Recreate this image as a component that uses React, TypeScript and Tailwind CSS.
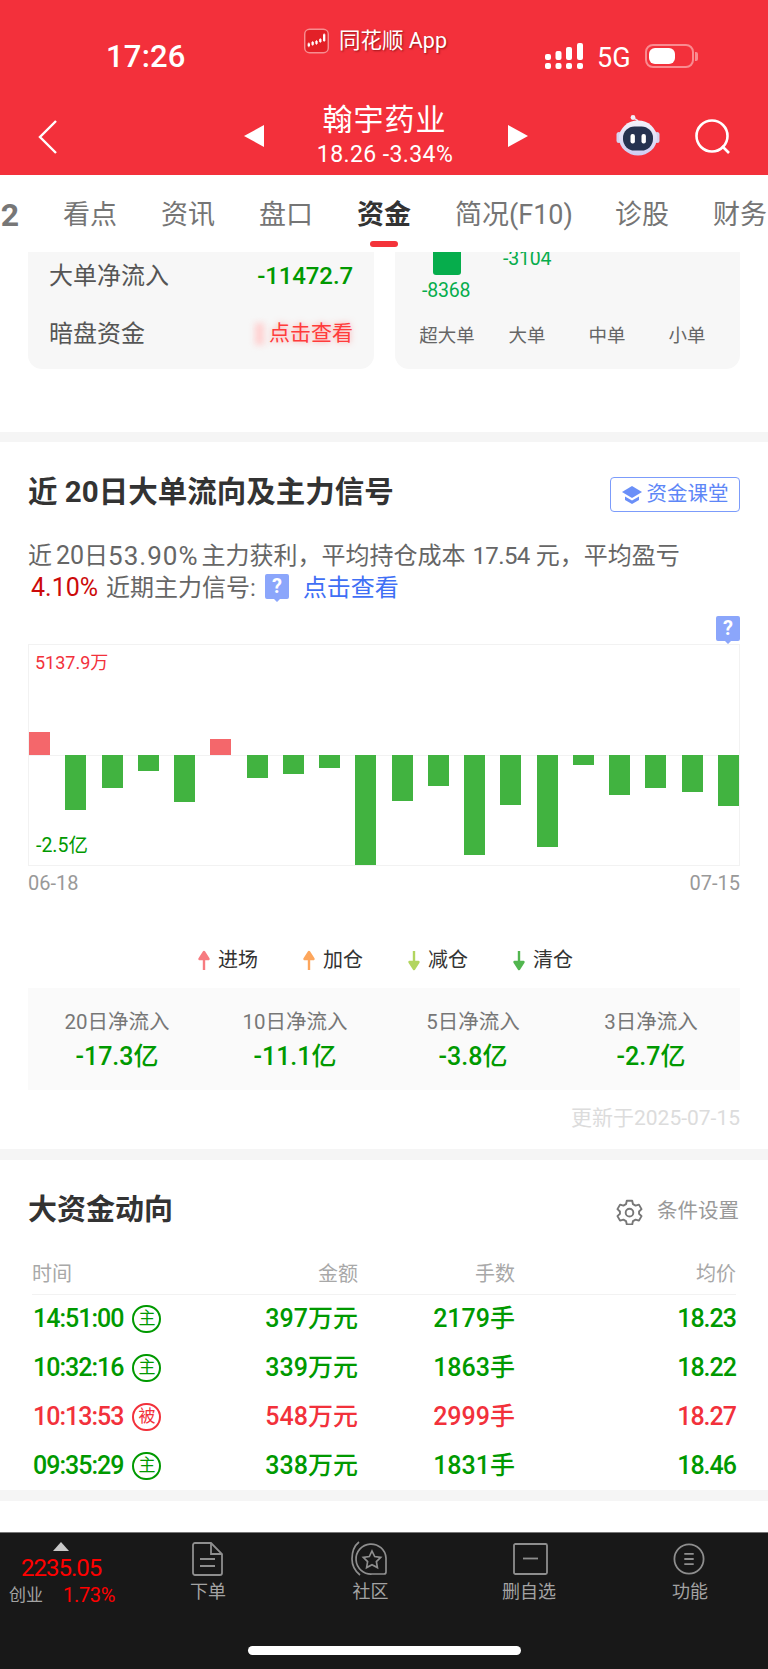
import React from 'react';

const bars = [23, -55, -33, -16, -47, 16, -23, -19, -13, -111, -46, -31, -100, -50, -92, -10, -40, -33, -37, -51];

const tabs = ['看点', '资讯', '盘口', '资金', '简况(F10)', '诊股', '财务'];

const stats = [
    { label: '20日净流入', value: '-17.3亿' },
    { label: '10日净流入', value: '-11.1亿' },
    { label: '5日净流入', value: '-3.8亿' },
    { label: '3日净流入', value: '-2.7亿' },
];

const rows = [
    { time: '14:51:00', tag: '主', amount: '397万元', hands: '2179手', price: '18.23', up: false },
    { time: '10:32:16', tag: '主', amount: '339万元', hands: '1863手', price: '18.22', up: false },
    { time: '10:13:53', tag: '被', amount: '548万元', hands: '2999手', price: '18.27', up: true },
    { time: '09:35:29', tag: '主', amount: '338万元', hands: '1831手', price: '18.46', up: false },
];

const legend = [
    { text: '进场', color: '#f77b80', up: true },
    { text: '加仓', color: '#fda65c', up: true },
    { text: '减仓', color: '#b2d55f', up: false },
    { text: '清仓', color: '#52b64f', up: false },
];

const AppLogo = () => (
    <svg width="26" height="26" viewBox="0 0 26 26" className="mt-[1px]">
        <rect x="0.75" y="0.75" width="24.5" height="24.5" rx="5" fill="#e32027" stroke="#f78d90" strokeWidth="1.5" />
        <path d="M5 14.500v5M9 13v5M13 12v5M17 10v5M21 5v9" stroke="#fff" strokeWidth="0.8" />
        <rect x="3.800" y="15.500" width="2.400" height="3" fill="#fff" />
        <rect x="7.800" y="14" width="2.400" height="3" fill="#fff" />
        <rect x="11.800" y="13" width="2.400" height="3" fill="#fff" />
        <rect x="15.800" y="11" width="2.400" height="3" fill="#fff" />
        <rect x="19.800" y="6" width="2.400" height="7" fill="#fff" />
    </svg>
);

const Robot = () => (
    <svg width="44" height="42" viewBox="0 0 44 42">
        <defs>
            <linearGradient id="head" x1="0" y1="0" x2="0" y2="1">
                <stop offset="0" stopColor="#f3f2fb" />
                <stop offset="1" stopColor="#cfcdf2" />
            </linearGradient>
        </defs>
        <path d="M22 8c0-3-3-2-4-4" stroke="#e8e6f6" strokeWidth="1.5" fill="none" />
        <circle cx="17" cy="3.500" r="2.400" fill="#f1eff9" />
        <rect x="0.500" y="18" width="5" height="11" rx="2.500" fill="#d5d3ef" />
        <rect x="38.500" y="18" width="5" height="11" rx="2.500" fill="#d5d3ef" />
        <ellipse cx="22" cy="24" rx="19" ry="17.500" fill="url(#head)" />
        <rect x="7" y="12.500" width="30" height="24" rx="11.500" fill="#25324f" />
        <rect x="14.500" y="20" width="4.400" height="9.500" rx="2" fill="#fff" />
        <rect x="25.500" y="20" width="4.400" height="9.500" rx="2" fill="#fff" />
    </svg>
);

const QuestionTag = () => (
    <svg width="24" height="28" viewBox="0 0 24 28" className="block">
        <path d="M2 0h20a2 2 0 0 1 2 2v21a2 2 0 0 1-2 2h-7l-3 3-3-3H2a2 2 0 0 1-2-2V2a2 2 0 0 1 2-2z" fill="#8ba6fb" />
        <text x="12" y="19" textAnchor="middle" fontSize="20" fontWeight="700" fill="#fff" fontFamily="Roboto">?</text>
    </svg>
);

const Arrow = ({ color, up }: { color: string; up: boolean }) => (
    <svg width="14" height="21" viewBox="0 0 14 21" className="-mx-[1px]">
        {up ? (
            <path d="M7 20V3M2.500 9 7 2l4.500 7z" stroke={color} strokeWidth="2.400" fill={color} strokeLinejoin="round" />
        ) : (
            <path d="M7 1v17M2.500 12 7 19l4.500-7z" stroke={color} strokeWidth="2.400" fill={color} strokeLinejoin="round" />
        )}
    </svg>
);

const Gear = () => (
    <svg width="27" height="27" viewBox="0 0 24 24" fill="none" stroke="#777" strokeWidth="1.7" strokeLinejoin="round">
        <path d="M9.600 2.500h4.800l.7 3 2.300 1.300 3-.9 2.300 4-2.200 2.100v2l2.200 2.100-2.300 4-3-.9-2.300 1.300-.7 3H9.600l-.7-3-2.300-1.300-3 .9-2.300-4L3.500 14v-2L1.300 9.900l2.300-4 3 .9 2.300-1.300z" />
        <circle cx="12" cy="13" r="3.400" />
    </svg>
);

const NavItem = ({ label, width, children }: { label: string; width: string; children: React.ReactNode }) => (
    <div className={`flex flex-col items-center ${width}`}>
        <div className="h-[34px] flex items-center justify-center">{children}</div>
        <div className="mt-[2px] text-[18px] leading-[28px] text-[#a3a3a3]">{label}</div>
    </div>
);

export default function App() {
    return (
        <div className="w-[768px] h-[1669px] flex flex-col overflow-hidden bg-white [font-family:Roboto,'Noto_Sans_CJK_SC',sans-serif]">
            {/* 红色头部 */}
            <div className="h-[175px] shrink-0 bg-[#f3303b] text-white">
                <div className="h-[100px] flex items-start pl-[106px]">
                    <div className="mt-[37px] w-[82px] text-[31px] leading-[40px] font-medium tracking-[0.2px]">17:26</div>
                    <div className="ml-[116px] mt-[27px] flex items-start w-[143px] whitespace-nowrap">
                        <AppLogo />
                        <div className="ml-[10px] text-[21.5px] leading-[28px] [text-shadow:1px_1px_2px_rgba(90,0,0,0.6)]">同花顺 App</div>
                    </div>
                    <svg width="38" height="28" viewBox="0 0 38 28" className="ml-[98px] mt-[42px] shrink-0" fill="#fff">
                        <rect x="0" y="12" width="6" height="6" rx="2" />
                        <rect x="0" y="21" width="6" height="6" rx="2" />
                        <rect x="10.500" y="9" width="6" height="9" rx="2" />
                        <rect x="10.500" y="21" width="6" height="6" rx="2" />
                        <rect x="21" y="5" width="6" height="13" rx="2" />
                        <rect x="21" y="21" width="6" height="6" rx="2" />
                        <rect x="32" y="1" width="6" height="17" rx="2" />
                        <rect x="32" y="21" width="6" height="6" rx="2" />
                    </svg>
                    <div className="ml-[14px] mt-[41px] text-[27px] leading-[34px]">5G</div>
                    <div className="ml-[14px] mt-[44px] flex items-center">
                        <div className="w-[49px] h-[24px] rounded-[8px] border-2 border-[#f98b90] p-[2px]">
                            <div className="w-[26px] h-full rounded-[6px] bg-white" />
                        </div>
                        <div className="ml-[1px] w-[3px] h-[9px] rounded-r-[2px] bg-[#f98b90]" />
                    </div>
                </div>
                <div className="h-[75px] flex items-start">
                    <svg width="22" height="36" viewBox="0 0 22 36" className="ml-[38px] mt-[19px]" fill="none" stroke="#fff" strokeWidth="2.400">
                        <path d="M18 2 2 18l16 16" />
                    </svg>
                    <svg width="20" height="22" viewBox="0 0 20 22" className="ml-[184px] mt-[25px]" fill="#fff">
                        <path d="M20 0v22L0 11z" />
                    </svg>
                    <div className="w-[244px] flex flex-col items-center">
                        <div className="mt-[1px] -ml-[3px] text-[30px] leading-[38px] tracking-[1px]">翰宇药业</div>
                        <div className="mt-[3px] -ml-[2px] text-[23px] leading-[26px] tracking-[0.4px] whitespace-nowrap">18.26 -3.34%</div>
                    </div>
                    <svg width="20" height="22" viewBox="0 0 20 22" className="mt-[25px]" fill="#fff">
                        <path d="M0 0v22l20-11z" />
                    </svg>
                    <div className="ml-[88px] mt-[14px]">
                        <Robot />
                    </div>
                    <svg width="38" height="38" viewBox="0 0 38 38" className="ml-[34px] mt-[18px]" fill="none" stroke="#fff" strokeWidth="2.600">
                        <circle cx="18" cy="18" r="15.500" />
                        <path d="m28 28 7 7" />
                    </svg>
                </div>
            </div>

            {/* 标签栏 */}
            <div className="h-[77px] shrink-0 flex items-start gap-[44px] overflow-hidden whitespace-nowrap relative z-10 bg-white">
                <div className="w-[19px] shrink-0 mt-[20px] text-[32px] leading-[40px] font-bold text-[#777] flex justify-end">2</div>
                {tabs.map((t) => (
                    <div key={t} className={`shrink-0 flex flex-col items-center ${t === '简况(F10)' ? '-mr-[2px]' : ''}`}>
                        <div className={`mt-[21px] text-[27px] leading-[38px] ${t === '资金' ? 'font-bold text-[#333]' : 'text-[#757575]'}`}>{t}</div>
                        {t === '资金' && <div className="mt-[7px] w-[28px] h-[6px] rounded-full bg-[#f4333a]" />}
                    </div>
                ))}
            </div>

            {/* 顶部被裁切的卡片 */}
            <div className="h-[180px] shrink-0 flex items-start gap-[21px] px-[28px]">
                <div className="w-[346px] h-[117px] rounded-b-[14px] bg-[#f7f7f7] px-[21px]">
                    <div className="mt-[7px] flex items-center justify-between h-[34px]">
                        <span className="text-[24px] text-[#555]">大单净流入</span>
                        <span className="text-[24px] font-medium text-[#009900] tracking-[-0.1px]">-11472.7</span>
                    </div>
                    <div className="mt-[24px] flex items-center justify-between h-[34px]">
                        <span className="text-[24px] text-[#555]">暗盘资金</span>
                        <span className="flex items-center">
                            <span className="mr-[5px] w-[9px] h-[22px] bg-[#ffcfcf] blur-[3px]" />
                            <span className="text-[21px] text-[#ff3b3b] [text-shadow:0_0_6px_rgba(255,90,90,0.55)]">点击查看</span>
                        </span>
                    </div>
                </div>
                <div className="w-[345px] h-[117px] rounded-b-[14px] bg-[#f7f7f7] relative">
                    <div className="ml-[38px] w-[28px] h-[23px] rounded-b-[3px] bg-[#06ad4c]" />
                    <span className="absolute left-[27px] top-[28px] text-[19.5px] leading-[22px] text-[#06ad4c] tracking-[-0.2px]">-8368</span>
                    <span className="absolute left-[108px] top-[-4px] text-[19.5px] leading-[22px] text-[#06ad4c] tracking-[-0.2px]">-3104</span>
                    <div className="absolute left-[12px] top-[71px] w-[320px] grid grid-cols-4 text-center text-[18.5px] leading-[26px] text-[#666]">
                        <span>超大单</span>
                        <span>大单</span>
                        <span>中单</span>
                        <span>小单</span>
                    </div>
                </div>
            </div>
            <div className="h-[10px] shrink-0 bg-[#f5f5f5]" />

            {/* 近20日大单流向 */}
            <div className="h-[707px] shrink-0 px-[28px]">
                <div className="mt-[35px] flex items-center justify-between h-[35px]">
                    <div className="-mt-[4px] text-[29.5px] font-bold text-[#333]">近 20日大单流向及主力信号</div>
                    <div className="w-[130px] h-[35px] rounded-[4px] border border-[#7c9cfb] flex items-center justify-center gap-[5px] text-[#5d86f7] text-[20.5px]">
                        <svg width="20" height="20" viewBox="0 0 20 20" fill="#6a8ff8">
                            <path d="M10 1 20 7l-10 6L0 7z" />
                            <path d="M3 11.500v3.500l7 4 7-4v-3.500l-7 4z" />
                        </svg>
                        资金课堂
                    </div>
                </div>
                <div className="mt-[28px] text-[24px] leading-[32px] text-[#666] whitespace-nowrap flex items-center">
                    <span>近</span>
                    <span className="ml-[4px] text-[25px]">20</span>
                    <span>日</span>
                    <span className="text-[26px] tracking-[1px]">53.90%</span>
                    <span className="ml-[3px]">主力获利，平均持仓成本</span>
                    <span className="ml-[7px] text-[24px] tracking-[-0.6px]">17.54</span>
                    <span className="ml-[6px]">元，平均盈亏</span>
                </div>
                <div className="h-[32px] flex items-center text-[24px] text-[#666] whitespace-nowrap">
                    <span className="ml-[3px] text-[25px] text-[#cc0a0a]">4.10%</span>
                    <span className="ml-[8px]">近期主力信号:</span>
                    <span className="ml-[9px] -mt-[1px]"><QuestionTag /></span>
                    <span className="ml-[14px] text-[#3f6ff5]">点击查看</span>
                </div>
                <div className="mt-[12px] flex justify-end">
                    <QuestionTag />
                </div>
                <div className="relative h-[222px] border border-[#f2f2f2] flex justify-between">
                    <span className="absolute left-[6px] top-[6px] text-[18px] leading-[24px] text-[#f2313b]">5137.9万</span>
                    <span className="absolute left-[7px] top-[189px] text-[19.5px] leading-[24px] text-[#009900]">-2.5亿</span>
                    <div className="absolute left-0 right-0 top-[110px] h-[1px] bg-[#f2f2f2]" />
                    {bars.map((v, i) => (
                        <div key={i} className="relative w-[21px] flex flex-col">
                            <div className="h-[110px] flex items-end">
                                {v > 0 && <div className="w-full bg-[#f4676b]" style={{ height: v }} />}
                            </div>
                            {v < 0 && <div className="w-full bg-[#41b340]" style={{ height: -v }} />}
                        </div>
                    ))}
                </div>
                <div className="mt-[4px] flex justify-between text-[20px] leading-[26px] text-[#999]">
                    <span>06-18</span>
                    <span>07-15</span>
                </div>
                <div className="mt-[48px] h-[32px] pl-[170px] flex items-center text-[20px] text-[#333]">
                    {legend.map((l) => (
                        <div key={l.text} className="w-[105px] flex items-center gap-[8px]">
                            <Arrow color={l.color} up={l.up} />
                            {l.text}
                        </div>
                    ))}
                </div>
                <div className="mt-[12px] h-[102px] bg-[#fafafa] grid grid-cols-4 text-center">
                    {stats.map((s) => (
                        <div key={s.label} className="pt-[20px]">
                            <div className="text-[20.5px] leading-[28px] text-[#777]">{s.label}</div>
                            <div className="mt-[3px] text-[25px] leading-[36px] font-medium text-[#009900]">{s.value}</div>
                        </div>
                    ))}
                </div>
                <div className="mt-[14px] text-right text-[21px] leading-[28px] text-[#dcdcdc]">更新于2025-07-15</div>
            </div>
            <div className="h-[11px] shrink-0 bg-[#f5f5f5]" />

            {/* 大资金动向 */}
            <div className="h-[331px] shrink-0">
                <div className="mt-[31px] pl-[28px] pr-[29px] h-[40px] flex items-center justify-between">
                    <div className="text-[29px] font-bold text-[#333]">大资金动向</div>
                    <div className="flex items-center gap-[14px] text-[20.5px] text-[#999]">
                        <Gear />
                        条件设置
                    </div>
                </div>
                <div className="mt-[29px] mx-[32px] h-[35px] border-b border-[#f2f2f2] grid grid-cols-[171px_155px_157px_221px] text-[20px] leading-[28px] text-[#a8a8a8]">
                    <span>时间</span>
                    <span className="text-right">金额</span>
                    <span className="text-right">手数</span>
                    <span className="text-right">均价</span>
                </div>
                <div className="mx-[32px] -mt-[1px]">
                    {rows.map((r) => {
                        const color = r.up ? 'text-[#f2313b]' : 'text-[#009900]';
                        return (
                            <div key={r.time} className={`h-[49px] grid grid-cols-[171px_155px_157px_221px] items-center text-[25px] font-medium ${color}`}>
                                <span className="flex items-center">
                                    <span className="ml-[1px] tracking-[-1px]">{r.time}</span>
                                    <span className={`ml-[9px] w-[29px] h-[28px] rounded-full border-2 flex items-center justify-center text-[17px] font-normal ${r.up ? 'border-[#f2313b]' : 'border-[#009900]'}`}>{r.tag}</span>
                                </span>
                                <span className="text-right">{r.amount}</span>
                                <span className="text-right">{r.hands}</span>
                                <span className="text-right tracking-[-1px]">{r.price}</span>
                            </div>
                        );
                    })}
                </div>
            </div>
            <div className="h-[11px] shrink-0 bg-[#f5f5f5] -mt-[1px]" />
            <div className="h-[31px] shrink-0" />

            {/* 底部导航 */}
            <div className="flex-1 bg-[#181818] border-t border-[#777] flex flex-col relative">
                <div className="h-[106px] flex items-start">
                    <div className="w-[123px] shrink-0 relative h-[80px]">
                        <div className="absolute left-[53px] top-[9px] w-0 h-0 border-x-[8px] border-x-transparent border-b-[9px] border-b-[#c8c8c8]" />
                        <div className="absolute left-[21px] top-[20px] text-[24px] leading-[30px] text-[#ff0000] tracking-[-1px]">2235.05</div>
                        <div className="absolute left-[9px] top-[49px] text-[17px] leading-[26px] text-[#a3a3a3]">创业</div>
                        <div className="absolute left-[63px] top-[48px] text-[20px] leading-[28px] text-[#ff0000] tracking-[-0.3px]">1.73%</div>
                    </div>
                    <div className="pt-[9px] flex">
                        <NavItem label="下单" width="w-[170px]">
                            <svg width="31" height="34" viewBox="0 0 31 34" fill="none" stroke="#8e8e8e" strokeWidth="1.800" className="-ml-[1px]">
                                <path d="M3 1h16l11 11v19a2 2 0 0 1-2 2H3a2 2 0 0 1-2-2V3a2 2 0 0 1 2-2z" />
                                <path d="M19 1v11h11M8 17h15M8 24h15" />
                            </svg>
                        </NavItem>
                        <NavItem label="社区" width="w-[155px]">
                            <svg width="36" height="36" viewBox="0 0 36 36" fill="none" stroke="#8e8e8e" strokeWidth="1.700" className="-ml-[4px]">
                                <path d="M8 1C3 5 1 11 1 18c0 6 3 12 8 16" />
                                <path d="M21 33h12a2 2 0 0 0 2-2V17A15 15 0 1 0 21 33z" />
                                <path d="m21 10 2.700 5.500 6 .9-4.300 4.200 1 6-5.400-2.900-5.400 2.900 1-6-4.300-4.200 6-.9z" />
                            </svg>
                        </NavItem>
                        <NavItem label="删自选" width="w-[162px]">
                            <svg width="35" height="32" viewBox="0 0 35 32" fill="none" stroke="#8e8e8e" strokeWidth="1.800" className="ml-[2px]">
                                <rect x="1" y="1" width="33" height="30" rx="1.500" />
                                <path d="M10 15.500h15" />
                            </svg>
                        </NavItem>
                        <NavItem label="功能" width="w-[160px]">
                            <svg width="32" height="32" viewBox="0 0 34 34" fill="none" stroke="#8e8e8e" strokeWidth="1.900" className="-ml-[3px]">
                                <circle cx="17" cy="17" r="15.500" />
                                <path d="M12 11.500h10M12 17h10M12 22.500h10" />
                            </svg>
                        </NavItem>
                    </div>
                </div>
                <div className="mx-auto mt-[7px] w-[273px] h-[9px] rounded-full bg-white" />
            </div>
        </div>
    );
}
